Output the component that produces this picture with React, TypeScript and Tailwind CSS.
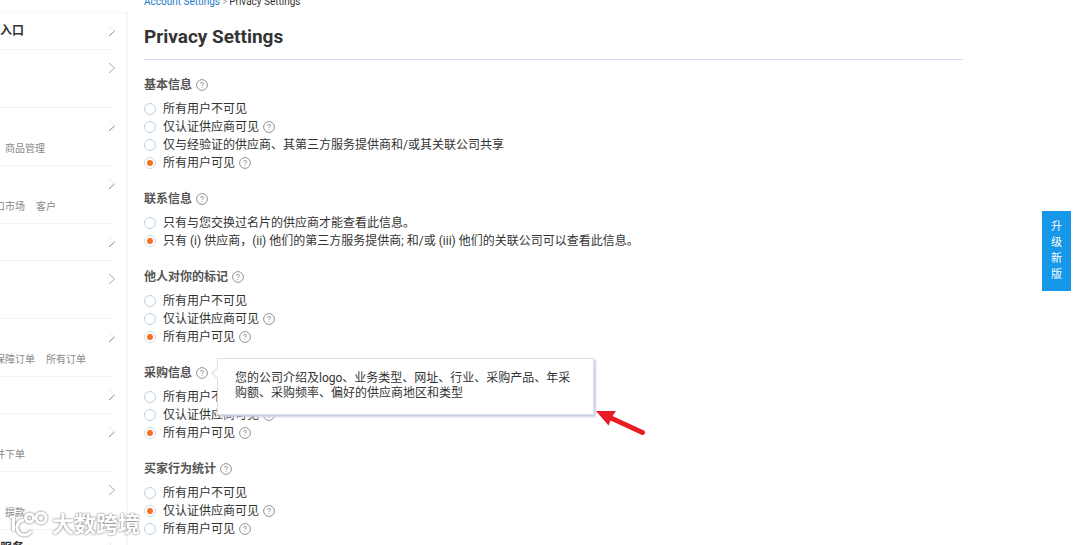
import React, { useState } from 'react';

interface MenuItem {
  title?: string;
  links?: string[];
  clipped?: boolean;
  tall?: boolean;
  fullArrow?: boolean;
}

interface Option {
  label: string;
  help?: boolean;
}

interface PrivacySection {
  id: string;
  title: string;
  tip?: string;
  selected: number;
  options: Option[];
}

const menuItems: MenuItem[] = [
  { title: '入口' },
  { tall: true, fullArrow: true },
  { tall: true, links: ['商品管理'] },
  { tall: true, links: ['口市场', '客户'], clipped: true },
  {},
  { tall: true, fullArrow: true },
  { tall: true, links: ['保障订单', '所有订单'], clipped: true },
  {},
  { tall: true, links: ['并下单'], clipped: true },
  { tall: true, links: ['提款'], fullArrow: true },
  { title: '服务', tall: true },
];

const visibility: Option[] = [
  { label: '所有用户不可见' },
  { label: '仅认证供应商可见', help: true },
  { label: '所有用户可见', help: true },
];

const sections: PrivacySection[] = [
  {
    id: 'basic',
    title: '基本信息',
    selected: 3,
    options: [
      { label: '所有用户不可见' },
      { label: '仅认证供应商可见', help: true },
      { label: '仅与经验证的供应商、其第三方服务提供商和/或其关联公司共享' },
      { label: '所有用户可见', help: true },
    ],
  },
  {
    id: 'contact',
    title: '联系信息',
    selected: 1,
    options: [
      { label: '只有与您交换过名片的供应商才能查看此信息。' },
      { label: '只有 (i) 供应商，(ii) 他们的第三方服务提供商; 和/或 (iii) 他们的关联公司可以查看此信息。' },
    ],
  },
  { id: 'remarks', title: '他人对你的标记', selected: 2, options: visibility },
  {
    id: 'sourcing',
    title: '采购信息',
    tip: '您的公司介绍及logo、业务类型、网址、行业、采购产品、年采购额、采购频率、偏好的供应商地区和类型',
    selected: 2,
    options: visibility,
  },
  { id: 'behavior', title: '买家行为统计', selected: 1, options: visibility },
];

function HelpButton() {
  return (
    <button type="button" aria-label="帮助" className="block h-3 w-3 shrink-0 text-[#777]">
      <svg viewBox="0 0 12 12" className="h-3 w-3" fill="none" stroke="currentColor" strokeWidth="0.8">
        <circle cx="6" cy="6" r="5.4" />
        <path d="M4.6 4.8a1.4 1.4 0 1 1 2.1 1.2c-.5.3-.7.5-.7 1.1M6 8.1v.9" />
      </svg>
    </button>
  );
}

function MenuArrow({ full }: { full?: boolean }) {
  return (
    <svg viewBox="0 0 8 12" className="-mr-[3px] h-3 w-2 shrink-0" fill="none" stroke="#aaa" strokeWidth="1">
      <path d="M1 1l5.5 5" opacity={full ? 1 : 0.25} />
      <path d="M6.5 6L1 11" stroke={full ? '#aaa' : '#888'} />
    </svg>
  );
}

function SideMenu() {
  return (
    <nav className="mt-3 w-32 shrink-0 border-t border-r-2 border-[#f5f6f7]">
      <ul className="mr-[13px]">
        {menuItems.map((item, idx) => (
          <li
            key={idx}
            className={`flex flex-col border-b border-[#f2f3f4] ${item.tall ? 'h-[58px]' : 'h-[37px]'}`}
          >
            <div className="flex h-9 shrink-0 items-center justify-between">
              <span className="text-xs font-bold text-[#333]">{item.title}</span>
              <MenuArrow full={item.fullArrow} />
            </div>
            {item.links && (
              <div className={`flex gap-[11px] text-[10px] leading-[10px] whitespace-nowrap text-[#888] ${item.clipped ? '-ml-[5px]' : 'ml-[5px]'}`}>
                {item.links.map((link) => (
                  <a key={link} href="#">{link}</a>
                ))}
              </div>
            )}
          </li>
        ))}
      </ul>
    </nav>
  );
}

function Tooltip({ text }: { text: string }) {
  return (
    <div role="tooltip" className="absolute -top-[6px] left-full z-10 ml-[9px] w-[377px] border border-[#d9deea] bg-white px-[17px] pt-3 pb-[13px] text-xs leading-[15px] font-normal text-[#333] shadow-[2px_2px_2px_#c9d0df]">
      <span className="absolute top-[10px] -left-[5px] h-2 w-2 rotate-45 border-b border-l border-[#d9deea] bg-white" />
      {text}
      {/* Panah merah penunjuk tooltip */}
      <svg viewBox="0 0 54 28" className="absolute top-full left-full -mt-1 h-7 w-[54px]" fill="#e81c24">
        <path d="M3 1H23L19.5 6L51 20.5A2.5 2.5 0 0 1 49 25L17.5 10.500L15.500 15.500Z" />
      </svg>
    </div>
  );
}

function Section({ section }: { section: PrivacySection }) {
  const [selected, setSelected] = useState(section.selected);

  return (
    <section className="mb-[18px]">
      <div className="relative mb-[6px] flex w-fit items-center gap-1 text-xs leading-[18px] font-bold text-[#555]">
        <h2 id={section.id}>{section.title}</h2>
        <HelpButton />
        {section.tip && <Tooltip text={section.tip} />}
      </div>
      <div role="radiogroup" aria-labelledby={section.id}>
        {section.options.map((option, idx) => (
          <div key={option.label} className="flex items-center gap-1">
            <label className="flex items-center gap-[7px] text-xs leading-[18px] text-[#333]">
              <input
                type="radio"
                name={section.id}
                checked={selected === idx}
                onChange={() => setSelected(idx)}
                className="grid h-3 w-3 shrink-0 appearance-none place-items-center rounded-full border border-[#bdd0e6] bg-white checked:border-[#d0d8e2] checked:before:h-[6px] checked:before:w-[6px] checked:before:rounded-full checked:before:bg-[#f5701f]"
              />
              {option.label}
            </label>
            {option.help && <HelpButton />}
          </div>
        ))}
      </div>
    </section>
  );
}

// Watermark di pojok kiri bawah
function Watermark() {
  return (
    <div className="pointer-events-none absolute bottom-[6px] left-2 z-20 flex items-center gap-1 drop-shadow-[0_0_1px_#666]">
      <svg viewBox="0 0 40 28" className="h-7 w-10" fill="none" stroke="#fff" strokeWidth="3">
        <path d="M2 6h3.500v14M16 9a7.500 7.500 0 1 0 7 11" />
        <circle cx="21.500" cy="7" r="4" />
        <circle cx="33" cy="7" r="5" />
      </svg>
      <span className="text-[22px] leading-7 font-bold text-white">大数跨境</span>
    </div>
  );
}

export default function App() {
  return (
    <div className="relative flex h-screen overflow-hidden bg-white font-[Roboto,'Noto_Sans_CJK_SC',sans-serif]">
      <SideMenu />

      <main className="ml-4 min-w-0 flex-1">
        <div className="-mt-1 flex gap-[2px] text-[10px] leading-3 text-[#333]">
          <a href="#" className="text-[#1a7cc2]">Account Settings</a>
          <span className="text-[#aaa]">&gt;</span>
          <span>Privacy Settings</span>
        </div>
        <h1 className="mt-4 mb-4 border-b border-[#cfdcee] pt-px pb-[10px] text-[19px] leading-6 font-bold text-[#333]">
          Privacy Settings
        </h1>
        {sections.map((section) => (
          <Section key={section.id} section={section} />
        ))}
      </main>

      <aside className="mt-[211px] mr-[9px] ml-[79px] shrink-0">
        <button type="button" className="flex w-[29px] flex-col items-center bg-[#1797e8] py-2 text-[11px] leading-4 text-white">
          <span className="w-3">升级新版</span>
        </button>
      </aside>

      <Watermark />
    </div>
  );
}
